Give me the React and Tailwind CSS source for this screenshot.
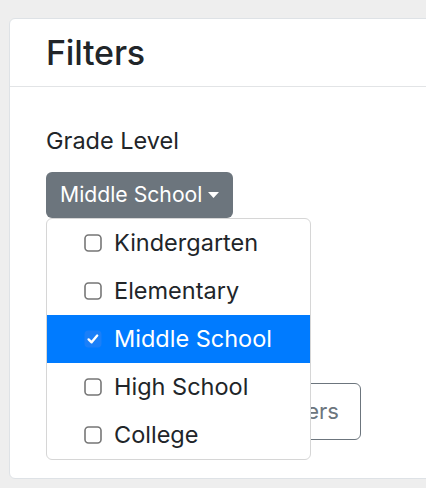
import React from "react";

function Box({ checked }) {
  if (checked) {
    return (
      <svg width="18" height="18" viewBox="0 0 18 18" className="shrink-0">
        <rect x="0.5" y="0.5" width="17" height="17" rx="4" fill="#1a7ff8" />
        <path d="M4.6 9.4 L7.6 12.3 L13.2 5.6" fill="none" stroke="#fff" strokeWidth="2.4" strokeLinecap="round" strokeLinejoin="round" />
      </svg>
    );
  }
  return (
    <svg width="18" height="18" viewBox="0 0 18 18" className="shrink-0">
      <rect x="1" y="1" width="16" height="16" rx="3.5" fill="#fff" stroke="#767676" strokeWidth="1.6" />
    </svg>
  );
}

const items = [
  { label: "Kindergarten", checked: false },
  { label: "Elementary", checked: false },
  { label: "Middle School", checked: true },
  { label: "High School", checked: false },
  { label: "College", checked: false },
];

export default function App() {
  return (
    <div
      className="w-[426px] h-[488px] bg-[#eeeeee] overflow-hidden pt-[18px] pl-[9px]"
      style={{ fontFamily: "Inter, 'Liberation Sans', sans-serif" }}
    >
      <div className="w-[440px] h-[461px] bg-white border-[1.5px] border-[#dee2e6] rounded-[6px] text-[#212529]">
        <div className="h-[68px] border-b-[1.5px] border-[#e2e4e6] pl-[36px] flex items-center">
          <h3 className="text-[34px] font-medium leading-none tracking-[-0.2px]">Filters</h3>
        </div>
        <div className="pl-[36px] pt-[39px]">
          <div className="text-[23.5px] leading-[30px] mb-[16px]">Grade Level</div>
          <div className="relative">
            <button className="h-[46px] bg-[#6c757d] text-white text-[21.2px] rounded-[6px] pl-[14px] pr-[14px] flex items-center gap-[6px]">
              <span>Middle School</span>
              <svg width="11" height="6" viewBox="0 0 11 6"><path d="M0 0 H11 L5.5 6 Z" fill="#fff" /></svg>
            </button>
            <div className="absolute left-0 top-[46px] w-[265px] bg-white border-[1.5px] border-[#d6d6d6] rounded-[6px] z-10 overflow-hidden">
              {items.map((it) => (
                <div
                  key={it.label}
                  className={
                    "h-[48px] flex items-center pl-[37px] gap-[12px] text-[23.5px] " +
                    (it.checked ? "bg-[#007bff] text-white" : "text-[#212529]")
                  }
                >
                  <Box checked={it.checked} />
                  <span>{it.label}</span>
                </div>
              ))}
            </div>
          </div>
          <div className="text-[23.5px] leading-[30px] mt-[26px] mb-[15px]">Subject</div>
          <button className="h-[46px] bg-[#5a6268] text-white text-[21px] rounded-[6px] px-[15px]">All Subjects</button>
          <div className="flex gap-[10px] mt-[48px]">
            <button className="h-[57px] w-[136px] bg-[#007bff] text-white text-[22px] rounded-[6px] whitespace-nowrap overflow-hidden">Apply Filters</button>
            <button className="h-[57px] w-[169px] border-[1.5px] border-[#6c757d] text-[#6c757d] text-[22px] rounded-[6px] whitespace-nowrap">Clear Filters</button>
          </div>
        </div>
      </div>
    </div>
  );
}
